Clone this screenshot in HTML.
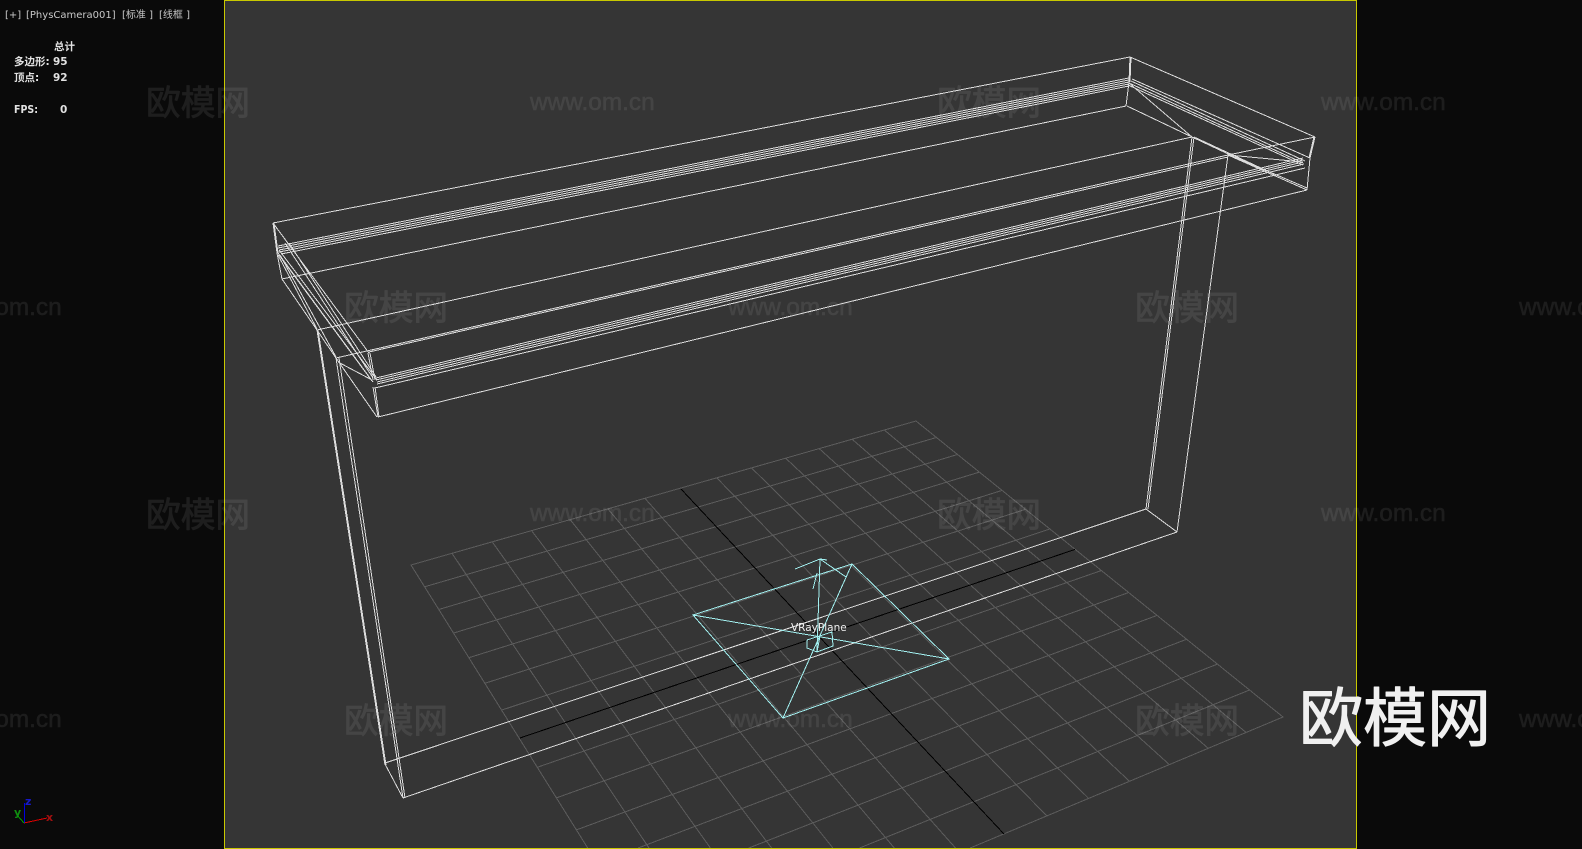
<!DOCTYPE html>
<html><head><meta charset="utf-8"><style>
html,body{margin:0;padding:0;width:1582px;height:849px;overflow:hidden;background:#0a0a0a}
svg{display:block;position:absolute;left:0;top:0}
.ui{font-family:"DejaVu Sans","Noto Sans CJK SC",sans-serif}
.wm text{font-family:"Noto Sans CJK SC","WenQuanYi Zen Hei",sans-serif;font-size:34.7px;fill:#fff;stroke:#fff;stroke-width:.8px;stroke-linejoin:round;opacity:.08}
.wu text{font-family:"Liberation Sans",sans-serif;font-size:24.4px;fill:#fff;stroke:#fff;stroke-width:.5px;opacity:.075}
</style></head><body>
<svg width="1582" height="849" viewBox="0 0 1582 849" xmlns="http://www.w3.org/2000/svg">
<rect width="1582" height="849" fill="#0a0a0a"/>
<rect x="224" y="0" width="1132" height="848" fill="#353535"/>
<g shape-rendering="crispEdges" fill="none">
<path stroke="#5c5c5c" d="M587.7 848L411 565L916 421L1283 717L970.2 848
M452 553.3L649 848M492.2 541.8L710.4 848M531.6 530.6L771.6 848M570.1 519.6L832.9 848M607.9 508.9L894.3 848M644.9 498.3L955.5 848
M716.7 477.8L1046.8 815.900M751.5 467.9L1088.7 798.4M785.7 458.2L1129.5 781.3M819.2 448.6L1169.4 764.6M852.1 439.2L1208.2 748.3M884.3 430L1246.1 732.5
M424.6 586.8L936.4 437.5M438.8 609.5L957.5 454.5M453.5 633.1L979.4 472.1M468.9 657.7L1002 490.4M484.9 683.3L1025.5 509.3M501.6 710.1L1049.9 529
M537.3 767.3L1101.4 570.5M556.4 797.9L1128.7 592.5M576.4 829.9L1157.1 615.4M638.1 848L1186.6 639.3M748.8 848L1217.4 664.1M859.6 848L1249.5 690"/>
<path stroke="#000" d="M681 489L1004 834M520 738L1075 549.4"/>
<path stroke="#dcdcdc" d="M273 223L1130 57L1315 137
M278 246L1129 78M278 248L1129 80M279 250L1129 82M279 252L1129 84M281 254L1129 86
M282 279L1126 106
M317 330L1192 137
M336 358L1228 155L1315 137M369 352L1228 157
M376 378L1303 158M376 380L1303 160M377 382L1303 162M377 384L1304 164M375 388L1305 168
M378 417L1307 190
M273 223L277 253L282 279M274 223L278 253M1130 57L1129 82L1126 106M1131 57L1130 82
M273 223L369 353M278 253L373 382M279 250L377 380M285 243L373 378M289 243L376 377M279 255L372 381M282 279L317 330M278 255L317 329M280 255L336 357M317 330L336 358M336 358L377 417M338 362L372 380M373 387L378 417M375 387L379 417M368 353L373 380M370 353L375 380
M317 330L385 765M318 330L386 765M336 358L403 798M339 358L405 798M385 764L403 798
M385 763L1146 509M403 798L1177 532M1146 509L1177 532
M1146 509L1192 137M1148 509L1194 137M1177 532L1228 155
M1132 79L1310 158M1129 83L1303 163M1131 81L1305 161M1128 85L1303 165M1127 106L1192 137M1129 83L1192 137
M1192 137L1273 175M1194 137L1276 175M1228 155L1307 190M1230 155L1307 188M1228 155L1303 162
M1315 137L1310 158L1307 190M1314 137L1309 158"/>
<path stroke="#a2f0f0" d="M693 615L852 564L949 659L783 718Z
M693 615L949 659M852 564L783 718
M820 559L817 652M795 569L820 559L827 560M820 559L846 577M817 573L813 589
M807 640L807 648L817 652L833 646L832 632L807 640M817 652L820 636"/>
<path stroke="#c8c800" d="M224.500 0.500V849M1356.500 0V849M224 0.500H1357M224 848.500H1357"/>
<path stroke="#e00000" d="M24 823L47 818"/>
<path stroke="#0000e0" d="M24.500 823V803"/>
<path stroke="#00a000" d="M24 823L17 815"/>
</g>
<g class="wm">
<text x="146" y="115">欧模网</text><text x="937" y="115">欧模网</text>
<text x="344" y="320">欧模网</text><text x="1135" y="320">欧模网</text>
<text x="146" y="527">欧模网</text><text x="937" y="527">欧模网</text>
<text x="344" y="733">欧模网</text><text x="1135" y="733">欧模网</text>
</g>
<g class="wu">
<text x="530" y="110">www.om.cn</text><text x="1321" y="110">www.om.cn</text>
<text x="-63" y="315">www.om.cn</text><text x="728" y="315">www.om.cn</text><text x="1519" y="315">www.om.cn</text>
<text x="530" y="521">www.om.cn</text><text x="1321" y="521">www.om.cn</text>
<text x="-63" y="727">www.om.cn</text><text x="728" y="727">www.om.cn</text><text x="1519" y="727">www.om.cn</text>
</g>
<g class="ui">
<text x="5" y="18" font-size="10" fill="#c8c8c8">[+]</text>
<text x="26" y="18" font-size="10" fill="#c8c8c8">[PhysCamera001]</text>
<text x="122" y="18" font-size="10" fill="#c8c8c8">[标准 ]</text>
<text x="159" y="18" font-size="10" fill="#c8c8c8">[线框 ]</text>
<g font-size="10.500" font-weight="bold" fill="#e2e2e2">
<text x="54" y="50">总计</text>
<text x="14" y="65">多边形:</text><text x="53" y="65">95</text>
<text x="14" y="81">顶点:</text><text x="53" y="81">92</text>
<text x="14" y="113" textLength="24" lengthAdjust="spacingAndGlyphs">FPS:</text><text x="60" y="113">0</text>
</g>
<text x="791" y="631" font-size="10.500" fill="#f0f0f0">VRayPlane</text>
<text x="25" y="805" font-size="11" font-weight="bold" fill="#1818c8">z</text>
<text x="14" y="816" font-size="11" font-weight="bold" fill="#109010">y</text>
<text x="46" y="821" font-size="11" font-weight="bold" fill="#a01010">x</text>
</g>
<text x="1299" y="741" font-family="'Noto Sans CJK SC',sans-serif" font-size="64" fill="#f0f0f0" stroke="#f0f0f0" stroke-width="1" stroke-linejoin="round">欧模网</text>
</svg>
</body></html>
